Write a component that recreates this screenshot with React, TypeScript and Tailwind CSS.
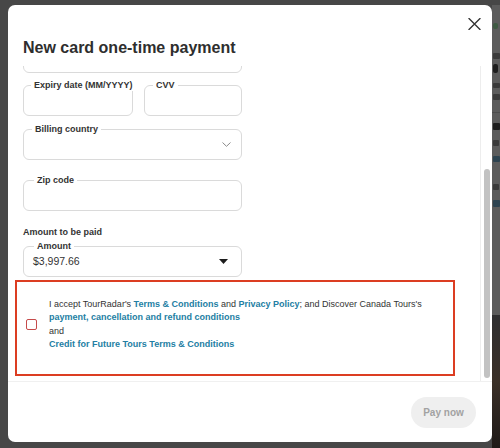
import React from 'react';

const font = { fontFamily: '"Liberation Sans", Arial, sans-serif' };

function Field({ label, labelLeft, className, children }: { label: string; labelLeft: string; className?: string; children?: React.ReactNode }) {
    return (
        <div className={`relative h-[31px] border border-[#dadada] rounded-[6px] flex items-center ${className ?? ''}`}>
            <span className={`absolute -top-[6px] ${labelLeft} px-[3px] bg-white text-[9px] leading-[11px] font-bold text-[#333] whitespace-nowrap`}>
                {label}
            </span>
            {children}
        </div>
    );
}

function PageStrip() {
    // the page behind the dialog, dimmed - only glyph edges peek out
    return (
        <div className="w-[8px] h-full flex flex-col overflow-hidden">
            <div className="h-[5px] bg-[#474747]" />
            <div className="h-[310px] bg-[#5c5c5c] flex flex-col pl-[1px]">
                <div className="mt-[18px] w-[5px] h-[6px] rounded-[2px] bg-[#3f5a43]" />
                <div className="mt-[24px] w-[7px] h-[6px] rounded-[1px] bg-[#3a3a3a]" />
                <div className="mt-[5px] w-[5px] h-[9px] rounded-[2px] bg-[#1e1e1e]" />
                <div className="mt-[10px] w-[7px] h-[5px] rounded-[1px] bg-[#3a3a3a]" />
                <div className="mt-[6px] w-[7px] h-[6px] rounded-[1px] bg-[#3a3a3a]" />
                <div className="mt-[12px] -ml-[1px] h-px bg-[#4d4d4d]" />
                <div className="mt-[10px] w-[7px] h-[7px] rounded-[1px] bg-[#1e1e1e]" />
                <div className="mt-[10px] w-[6px] h-[6px] rounded-[1px] bg-[#3a3a3a]" />
                <div className="mt-[10px] w-[7px] h-[6px] rounded-[1px] bg-[#2d4350]" />
                <div className="mt-[22px] w-[6px] h-[6px] rounded-[1px] bg-[#3a3a3a]" />
                <div className="mt-[10px] w-[7px] h-[7px] rounded-[1px] bg-[#2d4350]" />
            </div>
            <div className="flex-1 bg-gradient-to-b from-[#2f2f31] via-[#3a2f27] to-[#1f1a17]" />
        </div>
    );
}

export default function App() {
    return (
        <div className="w-[500px] h-[448px] bg-[#474747] flex overflow-hidden" style={font}>
            <div className="w-[8px]" />
            <div className="w-[484px] flex flex-col pt-[5px] pb-[6px]">
                <div className="flex-1 bg-white rounded-[7px] flex flex-col overflow-hidden">
                    {/* Header */}
                    <div className="relative h-[61px] shrink-0">
                        <h2 className="pl-[15px] pt-[33px] text-[16px] leading-5 font-bold text-[#2e2e2e]">
                            New card one-time payment
                        </h2>
                        <button className="absolute top-[12px] right-[11px] w-[14px] h-[13px] flex items-center justify-center">
                            <svg width="13" height="12" viewBox="0 0 13 12" fill="none" stroke="#333" strokeWidth="1.4" strokeLinecap="round">
                                <path d="M1 0.6L12 11.4M12 0.6L1 11.4" />
                            </svg>
                        </button>
                    </div>

                    {/* Scroll area */}
                    <div className="h-[315px] shrink-0 flex">
                        <div className="flex-1 overflow-hidden pl-[7px]">
                            <div className="ml-[8px] w-[219px] -mt-[24px] h-[31px] border border-[#dadada] rounded-[6px]" />

                            <div className="ml-[8px] w-[219px] mt-[12px] flex gap-[11px]">
                                <Field label="Expiry date (MM/YYYY)" labelLeft="left-[7px]" className="w-[110px]" />
                                <Field label="CVV" labelLeft="left-[8px]" className="flex-1" />
                            </div>

                            <Field label="Billing country" labelLeft="left-[8px]" className="ml-[8px] w-[219px] mt-[13px] justify-end pr-[10px]">
                                <svg width="9" height="5" viewBox="0 0 9 5" fill="none" stroke="#8a8a8a" strokeWidth="1">
                                    <path d="M0.5 0.5L4.5 4.3L8.5 0.5" />
                                </svg>
                            </Field>

                            <Field label="Zip code" labelLeft="left-[10px]" className="ml-[8px] w-[219px] mt-[20px]" />

                            <p className="ml-[8px] mt-[16px] text-[9px] leading-[11px] font-bold text-[#333]">Amount to be paid</p>

                            <Field label="Amount" labelLeft="left-[10px]" className="ml-[8px] w-[219px] mt-[8px] justify-between pl-[9px] pr-[13px]">
                                <span className="text-[10.5px] text-[#333]">$3,997.66</span>
                                <svg width="9" height="5" viewBox="0 0 9 5" fill="#1c1c1c">
                                    <path d="M0 0H9L4.5 5Z" />
                                </svg>
                            </Field>

                            <div className="mt-[3px] w-[440px] h-[96px] border-2 border-[#dc3d22] pt-[16px] pl-[9px] flex items-start">
                                <div className="flex items-center gap-[12px]">
                                    <span className="w-[11px] h-[11px] shrink-0 border-[1.5px] border-[#c64b4b] rounded-[2px]" />
                                    <p className="text-[9px] leading-[13.4px] text-[#333]">
                                        I accept TourRadar's <a className="font-bold text-[#237ea3]">Terms &amp; Conditions</a> and{' '}
                                        <a className="font-bold text-[#237ea3]">Privacy Policy</a>; and Discover Canada Tours's
                                        <br />
                                        <a className="font-bold text-[#237ea3]">payment, cancellation and refund conditions</a>
                                        <br />
                                        and
                                        <br />
                                        <a className="font-bold text-[#237ea3]">Credit for Future Tours Terms &amp; Conditions</a>
                                    </p>
                                </div>
                            </div>
                        </div>

                        {/* Scrollbar */}
                        <div className="w-[10px] mr-[2px] border-l border-[#ededed] pl-[3px] pt-[103px]">
                            <div className="w-[6px] h-[209px] rounded-full bg-[#c2c2c2]" />
                        </div>
                    </div>

                    {/* Footer */}
                    <div className="flex-1 border-t border-[#f0f0f0] flex justify-end items-start pt-[15px] pr-[16px]">
                        <button className="w-[65px] h-[31px] rounded-full bg-[#efefef] text-[10px] font-bold text-[#a2a2a2]">
                            Pay now
                        </button>
                    </div>
                </div>
            </div>
            <PageStrip />
        </div>
    );
}
